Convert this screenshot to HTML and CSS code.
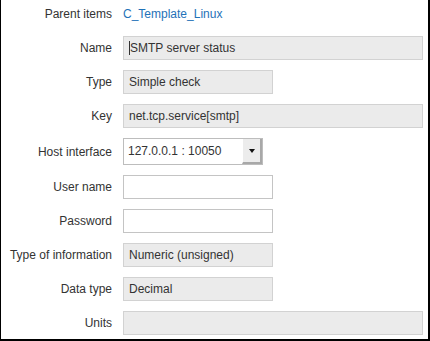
FILE: index.html
```html
<!DOCTYPE html>
<html lang="en">
<head>
    <meta charset="UTF-8">
    <title>Item</title>
    <link rel="stylesheet" href="styles.css">
</head>
<body>
    <div class="frame">
        <div class="form-grid">
            <label class="form-label">Parent items</label>
            <div class="form-value"><a class="link" href="#">C_Template_Linux</a></div>

            <label class="form-label">Name</label>
            <div class="field field-wide"><span class="caret"></span>SMTP server status</div>

            <label class="form-label">Type</label>
            <div class="field field-short">Simple check</div>

            <label class="form-label">Key</label>
            <div class="field field-wide">net.tcp.service[smtp]</div>

            <label class="form-label">Host interface</label>
            <div class="select">
                <span class="select-text">127.0.0.1 : 10050</span>
                <span class="select-btn"><span class="arrow"></span></span>
            </div>

            <label class="form-label">User name</label>
            <div class="field field-short field-empty"></div>

            <label class="form-label">Password</label>
            <div class="field field-short field-empty"></div>

            <label class="form-label">Type of information</label>
            <div class="field field-short">Numeric (unsigned)</div>

            <label class="form-label">Data type</label>
            <div class="field field-short">Decimal</div>

            <label class="form-label">Units</label>
            <div class="field field-wide"></div>
        </div>
    </div>
</body>
</html>
```

FILE: styles.css
```css
body {
    margin: 0;
    font-family: "Liberation Sans", Arial, sans-serif;
    font-size: 12px;
    color: #333;
    background: #fff;
}
.frame {
    width: 430px;
    height: 341px;
    box-sizing: border-box;
    border-left: 1px solid #000;
    border-right: 2px solid #000;
    border-bottom: 2px solid #000;
    padding-top: 2px;
}
.form-grid {
    display: grid;
    grid-template-columns: 111px 300px;
    column-gap: 11px;
    row-gap: 10px;
    align-items: center;
}
.form-label {
    text-align: right;
    color: #333;
}
.form-value {
    height: 24px;
    line-height: 24px;
}
.link {
    color: #1f72b8;
    text-decoration: none;
}
.field {
    height: 24px;
    box-sizing: border-box;
    border: 1px solid #d2d2d2;
    background: #ebebeb;
    padding: 0 5px;
    line-height: 22px;
    color: #333;
    white-space: nowrap;
}
.field-wide {
    width: 300px;
}
.field-short {
    width: 150px;
}
.field-empty {
    background: #fff;
    border-color: #c4c4c4;
}
.caret {
    display: inline-block;
    width: 1px;
    height: 14px;
    background: #333;
    vertical-align: -3px;
}
.select {
    display: flex;
    width: 140px;
    height: 27px;
    box-sizing: border-box;
    border: 1px solid #bdbdbd;
    background: #fff;
}
.select-text {
    flex: 1;
    padding-left: 4px;
    line-height: 25px;
}
.select-btn {
    width: 20px;
    background: #ececec;
    border-right: 2px solid #a8a8a8;
    border-bottom: 2px solid #a8a8a8;
    border-left: 1px solid #fff;
    box-sizing: border-box;
    display: flex;
    align-items: center;
    justify-content: center;
}
.arrow {
    width: 0;
    height: 0;
    border-left: 3px solid transparent;
    border-right: 3px solid transparent;
    border-top: 4px solid #111;
}
```
